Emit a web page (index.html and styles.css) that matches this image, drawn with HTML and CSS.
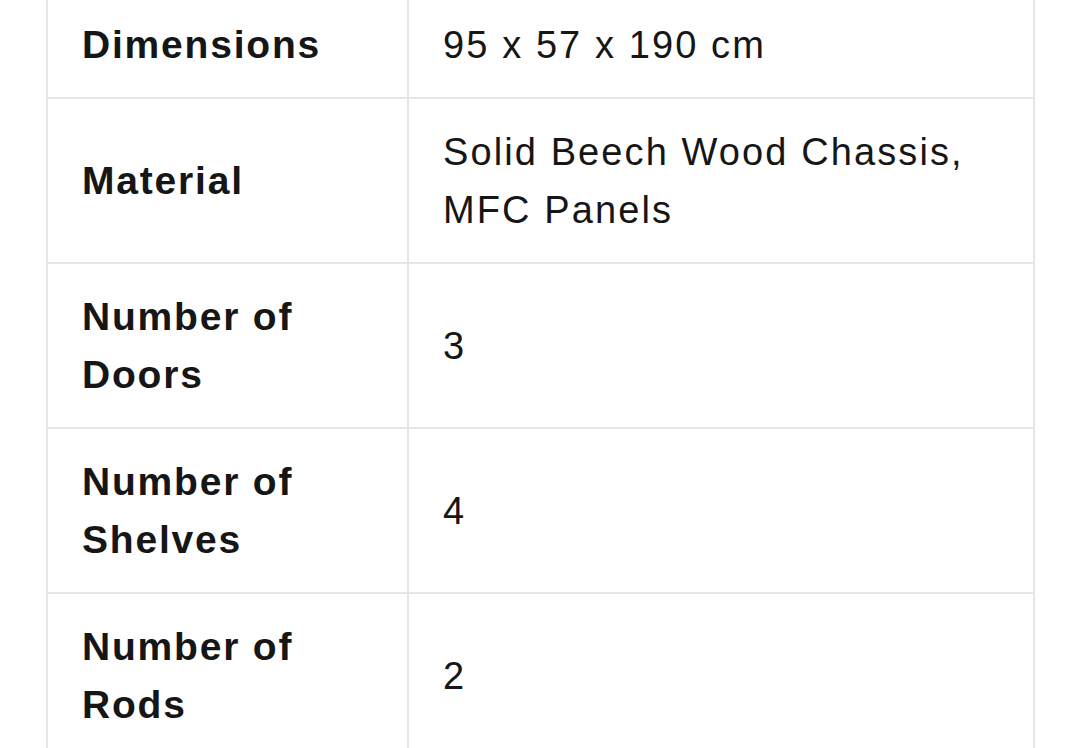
FILE: index.html
```html
<!DOCTYPE html>
<html>
<head>
<meta charset="utf-8">
<link rel="stylesheet" href="styles.css">
</head>
<body>
<table class="specs">
  <tr>
    <th class="label">Dimensions</th>
    <td class="value">95 x 57 x 190 cm</td>
  </tr>
  <tr>
    <th class="label">Material</th>
    <td class="value">Solid Beech Wood Chassis, MFC Panels</td>
  </tr>
  <tr>
    <th class="label">Number of Doors</th>
    <td class="value">3</td>
  </tr>
  <tr>
    <th class="label">Number of Shelves</th>
    <td class="value">4</td>
  </tr>
  <tr>
    <th class="label">Number of Rods</th>
    <td class="value">2</td>
  </tr>
</table>
</body>
</html>
```

FILE: styles.css
```css
html, body {
  margin: 0;
  padding: 0;
  background: #ffffff;
  overflow: hidden;
}

body {
  font-family: "Liberation Sans", Arial, sans-serif;
  color: #161616;
}

.specs {
  border-collapse: collapse;
  margin: -10px 0 0 46px;
  width: 989px;
  table-layout: fixed;
}

.specs th,
.specs td {
  border: 2px solid #e6e6e6;
  padding: 24px 30px 23px 34px;
  vertical-align: middle;
  text-align: left;
  line-height: 58px;
}

.label {
  width: 295px;
  font-weight: 700;
  font-size: 39px;
  letter-spacing: 1.8px;
}

.value {
  font-weight: 400;
  font-size: 38px;
  letter-spacing: 2.1px;
}
```
